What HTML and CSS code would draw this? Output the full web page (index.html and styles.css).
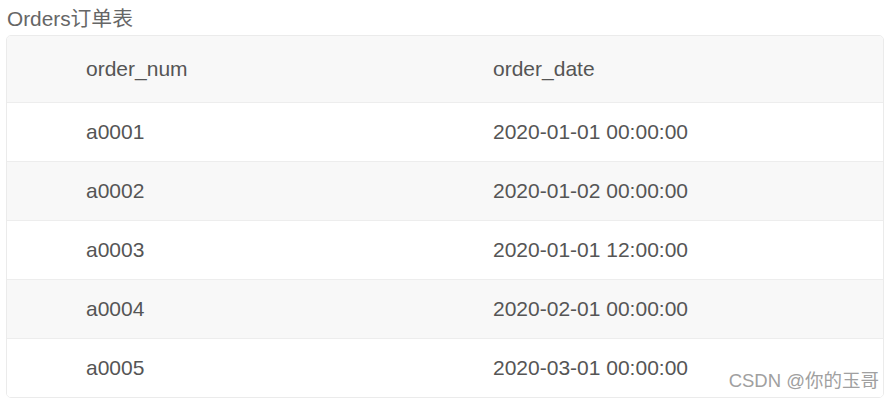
FILE: index.html
```html
<!DOCTYPE html>
<html lang="zh-CN">
<head>
<meta charset="utf-8">
<title>Orders订单表</title>
<link rel="stylesheet" href="styles.css">
</head>
<body>
<div class="page">
  <div class="caption">Orders订单表</div>
  <div class="table">
    <div class="row head">
      <div class="cell">order_num</div>
      <div class="cell">order_date</div>
    </div>
    <div class="row">
      <div class="cell">a0001</div>
      <div class="cell">2020-01-01 00:00:00</div>
    </div>
    <div class="row alt">
      <div class="cell">a0002</div>
      <div class="cell">2020-01-02 00:00:00</div>
    </div>
    <div class="row">
      <div class="cell">a0003</div>
      <div class="cell">2020-01-01 12:00:00</div>
    </div>
    <div class="row alt">
      <div class="cell">a0004</div>
      <div class="cell">2020-02-01 00:00:00</div>
    </div>
    <div class="row last">
      <div class="cell">a0005</div>
      <div class="cell">2020-03-01 00:00:00</div>
    </div>
    <div class="watermark">CSDN @你的玉哥</div>
  </div>
</div>
</body>
</html>
```
FILE: styles.css
```css
html, body {
  margin: 0;
  padding: 0;
  background: #ffffff;
}
body {
  font-family: "Liberation Sans", Arial, "Noto Sans CJK SC", sans-serif;
  color: #555555;
}
.page {
  padding: 5px 11px 0 6px;
}
.caption {
  font-size: 20.8px;
  line-height: 28px;
  color: #666666;
  padding-left: 1px;
  margin-bottom: 2px;
}
.table {
  position: relative;
  width: 878px;
  box-sizing: border-box;
  border: 1px solid #ebebeb;
  border-radius: 5px;
  overflow: hidden;
}
.row {
  display: grid;
  grid-template-columns: 407px 1fr;
  height: 58px;
  align-items: center;
  border-bottom: 1px solid #ededed;
  background: #ffffff;
}
.row.head {
  height: 66px;
  background: #f8f8f8;
}
.row.alt {
  background: #f8f8f8;
}
.row.last {
  border-bottom: none;
}
.cell {
  font-size: 21px;
  color: #555555;
  padding-left: 79px;
}
.watermark {
  position: absolute;
  right: 4px;
  bottom: 5px;
  font-size: 18.5px;
  color: #a0a0a0;
  text-shadow: 0 0 2px #ffffff;
}
```
